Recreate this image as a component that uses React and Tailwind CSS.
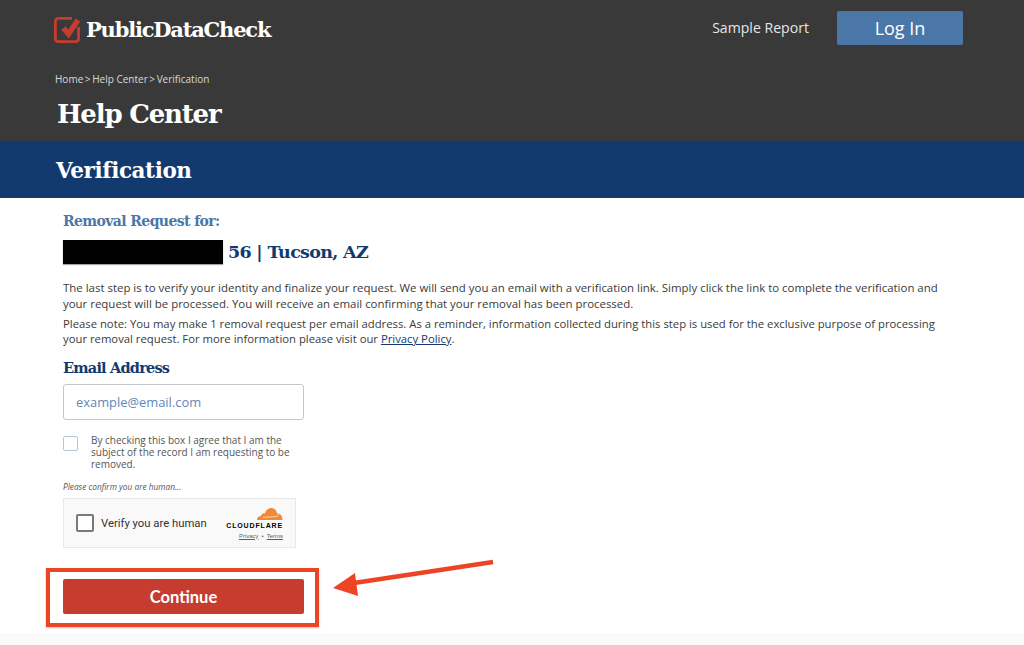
import React from 'react';

const slab = "font-['DejaVu_Serif',serif]";
const body = "font-['Open_Sans',sans-serif]";

function Logo() {
  return (
    <svg width="28" height="29" viewBox="0 0 28 29" className="shrink-0">
      <path d="M18 3.400 H4.400 Q1.400 3.400 1.400 6.400 V23.600 Q1.400 26.600 4.400 26.600 H21.600 Q24.600 26.600 24.600 23.600 V12" fill="none" stroke="#c63d30" strokeWidth="2.800" />
      <path d="M9.500 13 L14.500 19 L24 5" fill="none" stroke="#c63d30" strokeWidth="5.500" />
    </svg>
  );
}

function CloudflareBadge() {
  return (
    <div className="flex flex-col items-end">
      <svg width="28" height="14" viewBox="0 0 28 14">
        <path d="M2 13 C2 10 4 9 6 9 C6.500 7 8 6 10 6.500 C11 2.500 14 0.500 17 1 C20 1.500 22 4 22 6.500 L23 6.500 C26 6.500 27.500 9.500 27.500 13 Z" fill="#f08a38" />
        <path d="M8 10.500 L22 9.500 M22 9.500 L24 6.500" stroke="#fbe3c9" strokeWidth="0.8" fill="none" />
      </svg>
      <span className="text-[7px] leading-[9px] font-bold tracking-[0.85px] text-black font-['Liberation_Sans',sans-serif]">CLOUDFLARE</span>
      <div className="mt-[3px] flex items-center gap-[3px] font-['Liberation_Sans',sans-serif] text-[6px] leading-[7px] text-[#5d5d5d]">
        <span className="underline">Privacy</span>
        <span>•</span>
        <span className="underline">Terms</span>
      </div>
    </div>
  );
}

export default function App() {
  return (
    <div className={`relative h-[645px] overflow-hidden bg-white ${body}`}>
      <header className="h-[141px] bg-[#393939] text-white">
        <div className="flex items-start justify-between pl-[54px] pr-[61px] pt-[11px]">
          <div className="flex items-center gap-[4px] pt-[3px]">
            <Logo />
            <span className={`${slab} mt-[2px] text-[21px] leading-[28px] font-bold tracking-[-1.2px]`}>PublicDataCheck</span>
          </div>
          <div className="flex items-center gap-[28px]">
            <a className="text-[14.1px] text-[#e6e6e6]">Sample Report</a>
            <button className="flex h-[34px] w-[126px] items-center justify-center rounded-[2px] bg-[#4a77a8] text-[18px] text-white">Log In</button>
          </div>
        </div>
        <div className="mt-[27px] pl-[55px] text-[10px] leading-[14px] text-[#d9d9d9]">
          Home<span className="[word-spacing:-1px]"> &gt; </span>Help Center<span className="[word-spacing:-1px]"> &gt; </span>Verification
        </div>
        <h1 className={`${slab} mt-[10px] pl-[57px] text-[26px] leading-[36px] font-bold tracking-[-1.2px]`}>Help Center</h1>
      </header>

      <div className="flex h-[57px] items-center bg-[#123a6f] pl-[56px] pt-[3px]">
        <h2 className={`${slab} text-[21.5px] font-bold tracking-[-0.4px] text-white`}>Verification</h2>
      </div>

      <main className="pl-[63px] pr-[70px]">
        <h3 className={`${slab} mt-[14px] text-[14px] leading-[18px] font-bold tracking-[-0.6px] text-[#4a77a8]`}>Removal Request for:</h3>
        <div className="mt-[9px] flex items-center gap-[5px]">
          <div className="h-[24px] w-[160px] bg-black shadow-[0_1px_1px_rgba(0,0,0,0.35)]" />
          <span className={`${slab} mt-[1px] text-[17.5px] leading-[24px] font-bold tracking-[-0.7px] text-[#123a6f]`}>56 | Tucson, AZ</span>
        </div>
        <p className="mt-[16px] text-[11.45px] leading-[15.500px] text-[#3a3a3a]">
          The last step is to verify your identity and finalize your request. We will send you an email with a verification link. Simply click the link to complete the verification and your request will be processed. You will receive an email confirming that your removal has been processed.
        </p>
        <p className="mt-[5px] text-[11.3px] leading-[15px] text-[#3a3a3a]">
          Please note: You may make 1 removal request per email address. As a reminder, information collected during this step is used for the exclusive purpose of processing your removal request. For more information please visit our <a className="text-[#123a6f] underline">Privacy Policy</a>.
        </p>
        <label className={`${slab} mt-[13px] block text-[14.5px] leading-[18px] font-bold tracking-[-0.8px] text-[#123a6f]`}>Email Address</label>
        <div className="mt-[7px] flex h-[36px] w-[241px] items-center rounded-[3px] border border-[#c3c7cc] pl-[12px] pt-[2px] text-[12.9px] text-[#5f88b5]">example@email.com</div>
        <div className="mt-[14px] flex w-[241px] items-start">
          <div className="mt-[2px] h-[15px] w-[15px] shrink-0 rounded-[2px] border border-[#b5c5dc]" />
          <p className="ml-[13px] text-[10px] leading-[12px] text-[#555]">By checking this box I agree that I am the subject of the record I am requesting to be removed.</p>
        </div>
        <p className="mt-[11px] text-[8.3px] leading-[12px] italic text-[#555]">Please confirm you are human...</p>
        <div className="mt-[5px] flex h-[50px] w-[233px] items-center justify-between border border-[#e9e9e9] bg-[#f9f9f9] px-[12px]">
          <div className="flex items-center gap-[7px]">
            <div className="h-[18px] w-[18px] rounded-[2px] border-2 border-[#7a7a7a] bg-white" />
            <span className="mt-[2px] font-['Roboto',sans-serif] text-[11.3px] text-[#333]">Verify you are human</span>
          </div>
          <CloudflareBadge />
        </div>
        <button className="mt-[31px] flex h-[35px] w-[241px] items-center justify-center rounded-[2px] bg-[#c63d30] pt-[2px] font-['Lato',sans-serif] text-[16.5px] font-bold text-white">Continue</button>
      </main>

      <div className="absolute inset-x-0 bottom-0 h-[12px] bg-[#fafafa]" />

      {/* red annotation */}
      <div className="absolute left-[46px] top-[568px] h-[59px] w-[273px] border-[4px] border-[#ee4426] shadow-[0_1px_2px_rgba(0,0,0,0.25)]" />
      <svg className="absolute left-[330px] top-[555px]" width="170" height="50" viewBox="0 0 170 50">
        <path d="M163 7 L24 28" stroke="#ee4426" strokeWidth="4.500" fill="none" />
        <path d="M3 33 L25 18 L28 41 Z" fill="#ee4426" />
      </svg>
    </div>
  );
}
